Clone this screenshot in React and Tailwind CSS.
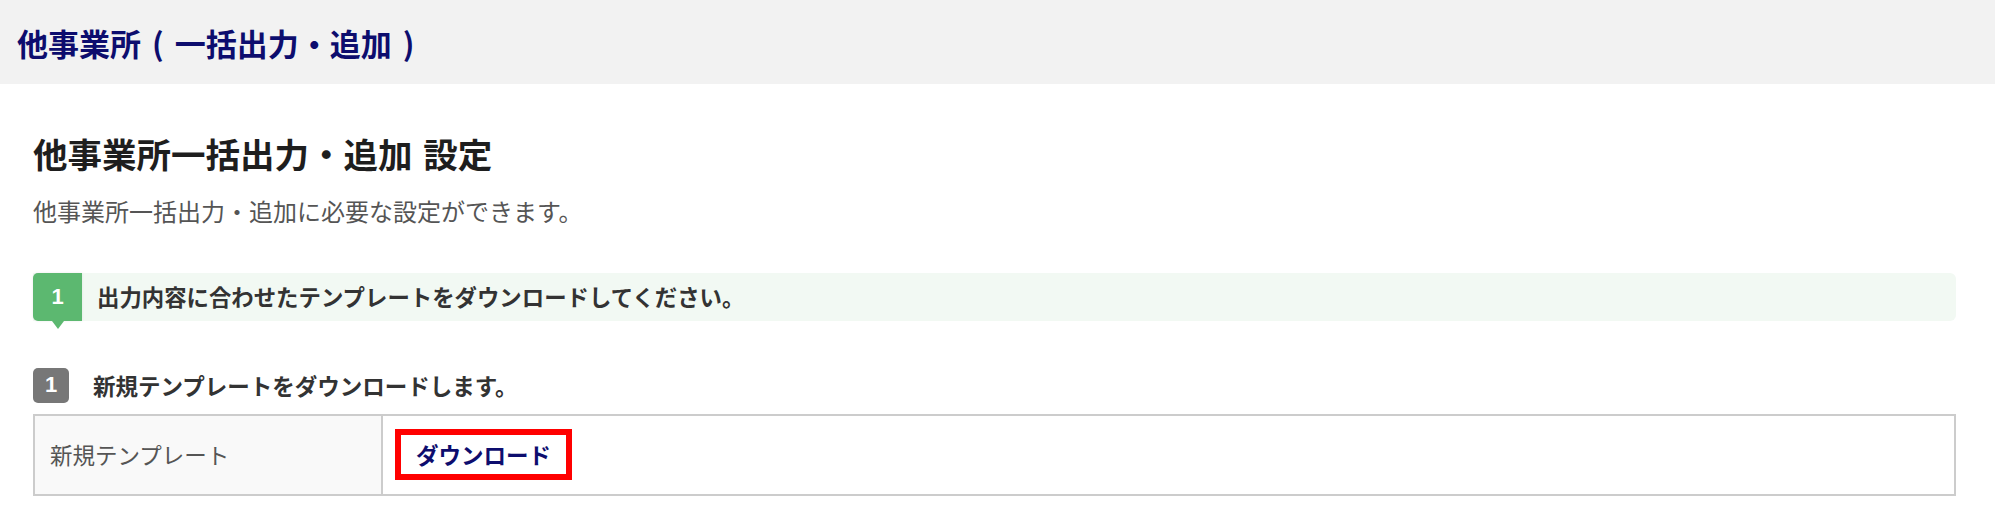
import React from "react";

const font = { fontFamily: '"Noto Sans CJK JP", "Noto Sans", sans-serif' };
const digit = { fontFamily: '"Liberation Sans", Arial, sans-serif' };

export default function App() {
  return (
    <div className="w-[2000px] h-[519px] bg-white overflow-hidden" style={font}>
      <header className="h-[84px] mr-[5px] bg-[#f2f2f2] flex items-center pl-[17px]">
        <h1 className="text-[31px] leading-none font-bold text-[#0d0d6e] [word-spacing:4px]">
          他事業所 ( 一括出力・追加 )
        </h1>
      </header>

      <main className="pl-[33px] pr-[44px]">
        <h2 className="mt-[52px] text-[34.5px] leading-none font-bold text-[#1e1e1e] [word-spacing:3px]">
          他事業所一括出力・追加 設定
        </h2>
        <p className="mt-[28px] text-[24px] leading-none text-[#555]">
          他事業所一括出力・追加に必要な設定ができます。
        </p>

        <div className="mt-[50px] h-[48px] flex items-center bg-[#f2f9f3] rounded-r-[6px]">
          <div className="relative w-[49px] h-[48px] bg-[#5cb870] rounded-l-[5px] flex items-center justify-center text-white text-[22px] font-bold leading-none shadow-[0_0_3px_rgba(0,0,0,0.08)]">
            <span style={digit}>1</span>
            <span className="absolute left-[19px] top-[48px] w-0 h-0 border-l-[6px] border-r-[6px] border-t-[8px] border-l-transparent border-r-transparent border-t-[#5cb870]"></span>
          </div>
          <span className="ml-[15px] text-[22.4px] leading-none font-bold text-[#333]">
            出力内容に合わせたテンプレートをダウンロードしてください。
          </span>
        </div>

        <div className="mt-[47px] flex items-center">
          <div className="w-[36px] h-[35px] bg-[#777] rounded-[5px] flex items-center justify-center text-white text-[22px] font-bold leading-none">
            <span style={digit}>1</span>
          </div>
          <span className="ml-[24px] text-[22.5px] leading-none font-bold text-[#333]">
            新規テンプレートをダウンロードします。
          </span>
        </div>

        <div className="mt-[11px] h-[82px] flex border-2 border-[#cccccc]">
          <div className="w-[348px] bg-[#f9f9f9] border-r-2 border-[#cccccc] flex items-center pl-[15px] text-[22.5px] leading-none text-[#555]">
            新規テンプレート
          </div>
          <div className="flex-1 flex items-center pl-[12px]">
            <a className="border-[6px] border-[#ff0000] h-[51px] px-[15px] flex items-center text-[22.5px] leading-none font-bold text-[#0d0d6e]">
              ダウンロード
            </a>
          </div>
        </div>
      </main>
    </div>
  );
}
